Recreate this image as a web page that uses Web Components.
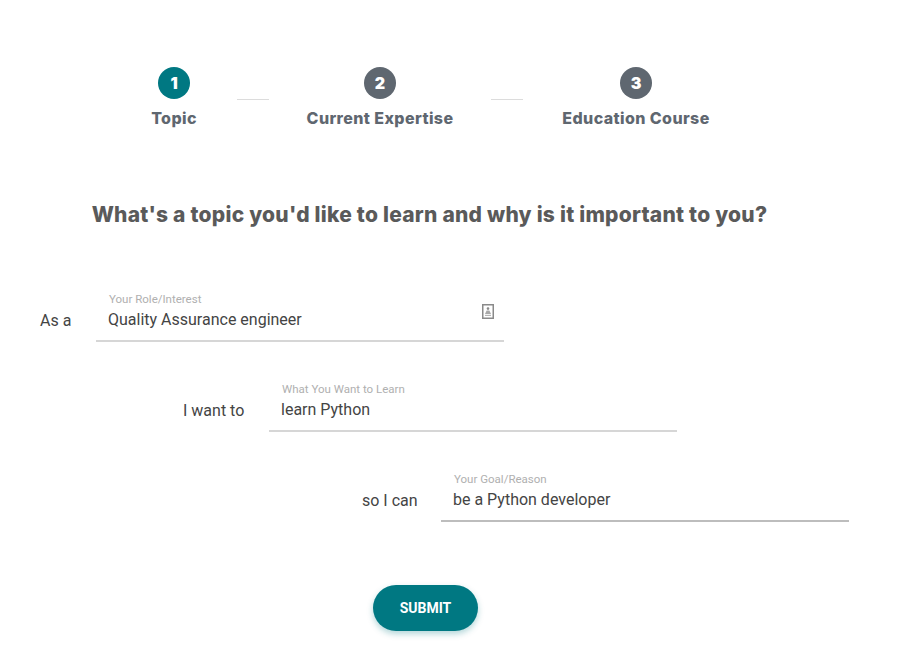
<!DOCTYPE html>
<html>
<head>
<meta charset="utf-8">
<style>
  html, body { margin: 0; background: #fff; }
  body { width: 904px; height: 656px; overflow: hidden; font-family: Roboto, sans-serif; }
</style>
</head>
<body>
<topic-page>
  <step-bar>
    <step-item num="1" label="Topic" width="44" active></step-item>
    <step-link before="41" after="38"></step-link>
    <step-item num="2" label="Current Expertise" width="146"></step-item>
    <step-link before="38" after="39"></step-link>
    <step-item num="3" label="Education Course" width="148"></step-item>
  </step-bar>
  <h-question>What's a topic you'd like to learn and why is it important to you?</h-question>
  <form-row indent="40" label-width="32" label="As a" caption="Your Role/Interest" value="Quality Assurance engineer" icon></form-row>
  <form-row indent="183" label-width="62" label="I want to" caption="What You Want to Learn" value="learn Python"></form-row>
  <form-row indent="362" label-width="55" label="so I can" caption="Your Goal/Reason" value="be a Python developer" line="#bdbdbd"></form-row>
  <submit-button>SUBMIT</submit-button>
</topic-page>

<script>
// Page shell
class TopicPage extends HTMLElement {
  constructor() {
    super();
    this.attachShadow({ mode: 'open' });
    this.shadowRoot.innerHTML = `
      <style>
        :host { display: block; padding-top: 67px; }
      </style>
      <slot></slot>
    `;
  }
}

// Stepper row
class StepBar extends HTMLElement {
  constructor() {
    super();
    this.attachShadow({ mode: 'open' });
    this.shadowRoot.innerHTML = `
      <style>
        :host { display: flex; align-items: flex-start; padding-left: 152px; }
      </style>
      <slot></slot>
    `;
  }
}

class StepItem extends HTMLElement {
  constructor() {
    super();
    this.attachShadow({ mode: 'open' });
  }
  connectedCallback() {
    const bg = this.hasAttribute('active') ? '#007882' : '#5f6770';
    this.shadowRoot.innerHTML = `
      <style>
        :host {
          display: flex;
          flex-direction: column;
          align-items: center;
          width: ${this.getAttribute('width')}px;
        }
        .dot {
          width: 32px;
          height: 32px;
          border-radius: 50%;
          background: ${bg};
          color: #fff;
          display: flex;
          align-items: center;
          justify-content: center;
          font: 900 16px Inter, sans-serif;
        }
        .name {
          margin-top: 9px;
          font: 800 16px/20px Inter, sans-serif;
          letter-spacing: 0.4px;
          color: #5f6770;
          white-space: nowrap;
        }
      </style>
      <div class="dot">${this.getAttribute('num')}</div>
      <div class="name">${this.getAttribute('label')}</div>
    `;
  }
}

class StepLink extends HTMLElement {
  constructor() {
    super();
    this.attachShadow({ mode: 'open' });
  }
  connectedCallback() {
    this.shadowRoot.innerHTML = `
      <style>
        :host {
          display: block;
          width: 32px;
          height: 1px;
          margin: 32px ${this.getAttribute('after')}px 0 ${this.getAttribute('before')}px;
          background: #dcdcdc;
        }
      </style>
    `;
  }
}

// Question heading
class HQuestion extends HTMLElement {
  constructor() {
    super();
    this.attachShadow({ mode: 'open' });
    this.shadowRoot.innerHTML = `
      <style>
        :host {
          display: block;
          margin: 73px 0 63px;
          width: 859px;
          text-align: center;
          font: 800 21px/28px Inter, sans-serif;
          letter-spacing: 0.24px;
          color: #5a5a5a;
          white-space: nowrap;
        }
      </style>
      <slot></slot>
    `;
  }
}

// One "As a ..." line with its text field
class FormRow extends HTMLElement {
  constructor() {
    super();
    this.attachShadow({ mode: 'open' });
  }
  connectedCallback() {
    const icon = this.hasAttribute('icon') ? `
      <svg class="icon" width="12" height="15" viewBox="0 0 12 15">
        <rect x="0.75" y="0.75" width="10.5" height="13.5" fill="none" stroke="#8a8a8a" stroke-width="1.5"/>
        <circle cx="6" cy="4.6" r="1.3" fill="#8a8a8a"/>
        <path d="M4.6 6.6h2.8L9 10H3z" fill="#a8a8a8"/>
        <rect x="3" y="10.8" width="6" height="1.2" fill="#b5b5b5"/>
      </svg>` : '';
    this.shadowRoot.innerHTML = `
      <style>
        :host {
          display: flex;
          align-items: flex-end;
          gap: 24px;
          padding-left: ${this.getAttribute('indent')}px;
          margin-bottom: 40px;
        }
        .label {
          width: ${this.getAttribute('label-width')}px;
          font-size: 16px;
          line-height: 20px;
          color: #444;
          padding-bottom: 11px;
          white-space: nowrap;
        }
        .field {
          position: relative;
          width: 408px;
          height: 50px;
          box-sizing: border-box;
          border-bottom: 2px solid ${this.getAttribute('line') || '#d6d6d6'};
          padding: 0 12px;
        }
        .caption {
          font-size: 11.5px;
          line-height: 14px;
          color: #b0b0b0;
          padding-left: 1px;
        }
        .value {
          margin-top: 4px;
          font-size: 16px;
          line-height: 20px;
          color: #444;
        }
        .icon { position: absolute; right: 10px; top: 12px; }
      </style>
      <div class="label">${this.getAttribute('label')}</div>
      <div class="field">
        <div class="caption">${this.getAttribute('caption')}</div>
        <div class="value">${this.getAttribute('value')}</div>
        ${icon}
      </div>
    `;
  }
}

// Submit pill
class SubmitButton extends HTMLElement {
  constructor() {
    super();
    this.attachShadow({ mode: 'open' });
    this.shadowRoot.innerHTML = `
      <style>
        :host { display: flex; justify-content: center; margin-top: 63px; width: 851px; }
        button {
          width: 105px;
          height: 46px;
          border: none;
          border-radius: 23px;
          background: #007882;
          color: #fff;
          font: 700 14px Roboto, sans-serif;
          box-shadow: 0 3px 6px rgba(0, 120, 130, 0.3);
          padding: 0;
        }
      </style>
      <button><slot></slot></button>
    `;
  }
}

customElements.define('topic-page', TopicPage);
customElements.define('step-bar', StepBar);
customElements.define('step-item', StepItem);
customElements.define('step-link', StepLink);
customElements.define('h-question', HQuestion);
customElements.define('form-row', FormRow);
customElements.define('submit-button', SubmitButton);
</script>
</body>
</html>
